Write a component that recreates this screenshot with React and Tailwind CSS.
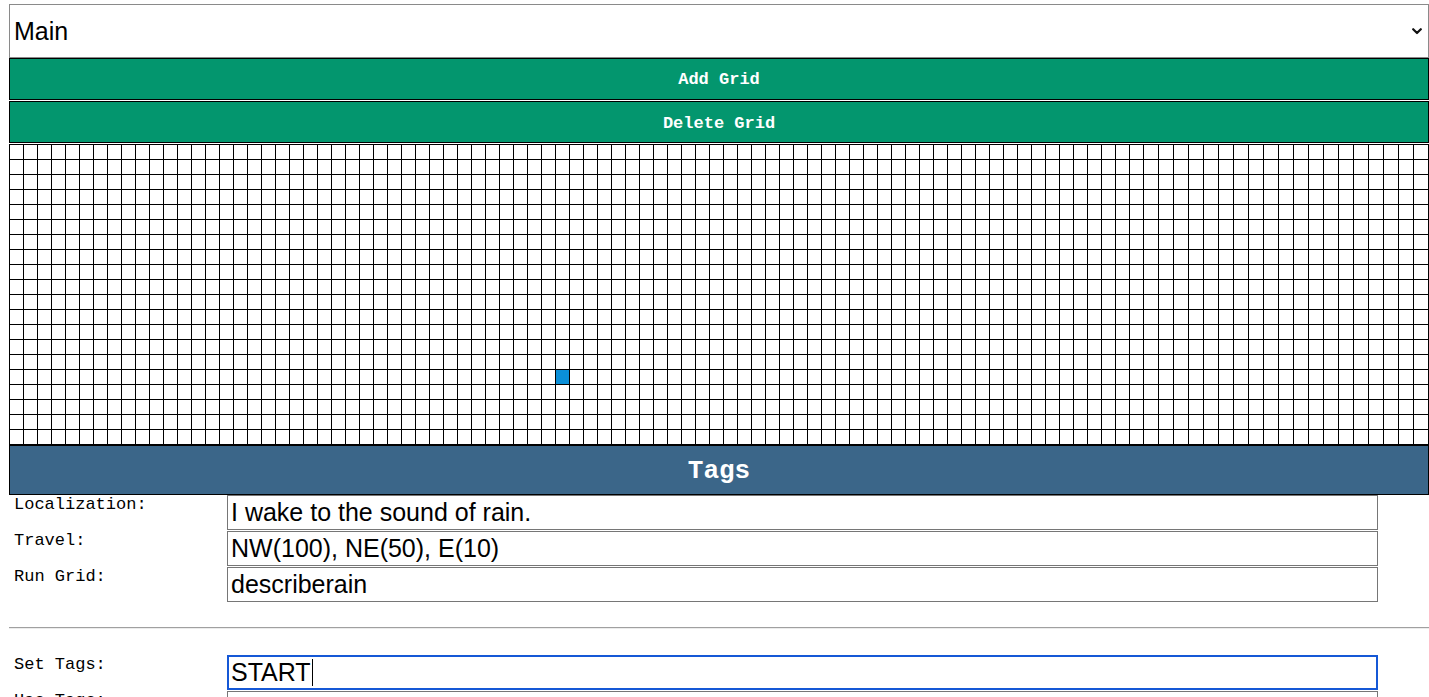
import React from "react";

function Field({ label, value, focused, caret }) {
  return (
    <div className="flex items-start">
      <div className="w-[218px] shrink-0 pl-[5px] text-[17px] leading-[19px] text-black font-['Liberation_Mono',monospace]">
        {label}
      </div>
      <div
        className={
          "w-[1151px] h-[35px] shrink-0 bg-white flex items-center text-[25px] leading-none text-black font-['Liberation_Sans',Arial,sans-serif] " +
          (focused
            ? "border-2 border-[#1558d6] px-[2px]"
            : "border border-[#767676] px-[3px]")
        }
      >
        <span>{value}</span>
        {caret && <span className="inline-block w-px h-[27px] bg-black ml-[1px]" />}
      </div>
    </div>
  );
}

export default function App() {
  const cells = [];
  for (let r = 0; r < 20; r++) {
    for (let c = 0; c < 100; c++) {
      const active = r === 15 && c === 39;
      cells.push(
        <div
          key={r * 100 + c}
          className={
            "h-[15px] border-r border-b border-black " +
            (active ? "bg-[#0a8fd8]" : "bg-white")
          }
        />
      );
    }
  }

  return (
    <div className="h-[697px] overflow-hidden bg-white">
      <div className="ml-[9px] w-[1420px] pt-[4px]">
        {/* select */}
        <div className="h-[54px] border border-[#8a8a8a] bg-white flex items-center justify-between pl-[4px] pr-[5px]">
          <span className="text-[25px] leading-none text-black font-['Liberation_Sans',Arial,sans-serif]">
            Main
          </span>
          <svg width="10" height="7" viewBox="0 0 10 7" className="mr-[1px]">
            <polyline
              points="1.2,1.2 5,5 8.8,1.2"
              fill="none"
              stroke="#111"
              strokeWidth="2.2"
              strokeLinecap="round"
              strokeLinejoin="round"
            />
          </svg>
        </div>

        {/* buttons */}
        <div className="h-[42px] pt-[2px] bg-[#03966e] border border-black flex items-center justify-center text-white font-bold text-[17px] font-['Liberation_Mono',monospace]">
          Add Grid
        </div>
        <div className="mt-[1px] h-[42px] pt-[3px] bg-[#03966e] border border-black flex items-center justify-center text-white font-bold text-[17px] font-['Liberation_Mono',monospace]">
          Delete Grid
        </div>

        {/* grid */}
        <div className="mt-[1px] grid grid-cols-[repeat(81,14px)_repeat(19,15px)] border-l border-t border-black">
          {cells}
        </div>

        {/* tags header */}
        <div className="h-[50px] pt-[3px] bg-[#3b6689] border border-black flex items-center justify-center text-white font-bold text-[26px] font-['Liberation_Mono',monospace]">
          Tags
        </div>

        <div className="flex flex-col gap-[1px]">
          <Field label="Localization:" value="I wake to the sound of rain." />
          <Field label="Travel:" value="NW(100), NE(50), E(10)" />
          <Field label="Run Grid:" value="describerain" />
        </div>

        <div className="mt-[25px] h-[2px] border-t border-[#a0a0a0] border-b border-b-[#ececec]" />

        <div className="mt-[26px] flex flex-col gap-[1px]">
          <Field label="Set Tags:" value="START" focused caret />
          <Field label="Has Tags:" value="" />
        </div>
      </div>
    </div>
  );
}
